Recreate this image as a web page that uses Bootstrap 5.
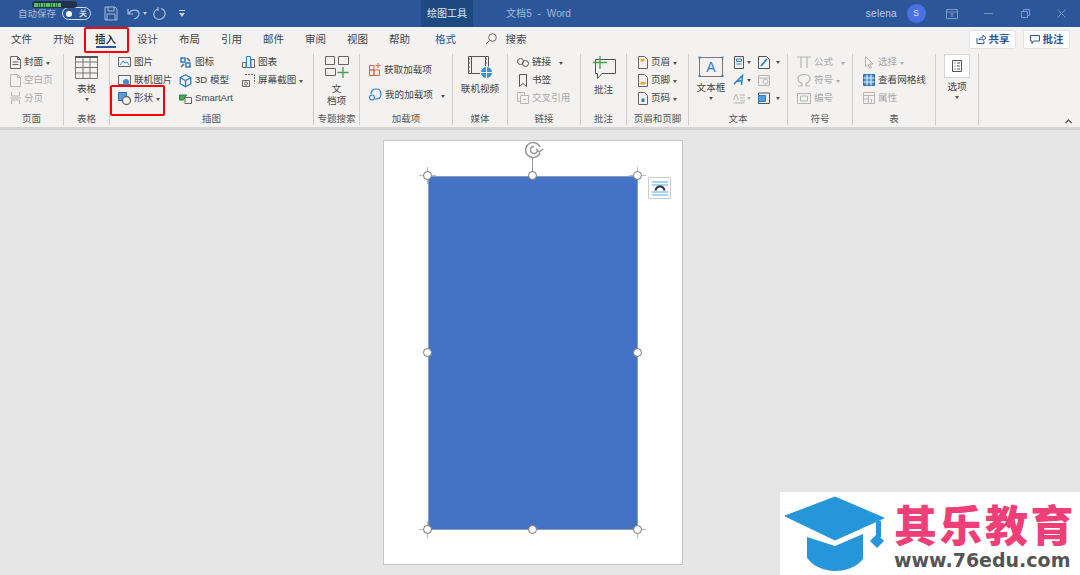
<!DOCTYPE html>
<html lang="zh-CN"><head><meta charset="utf-8"><title>文档5 - Word</title>
<link href="https://cdn.jsdelivr.net/npm/bootstrap@5.3.0/dist/css/bootstrap.min.css" rel="stylesheet">
<style>
html,body{width:1080px;height:575px;overflow:hidden;margin:0;background:#e6e6e6}
body{font-family:"Liberation Sans","Noto Sans CJK SC",sans-serif;font-size:10px;line-height:1;color:#444;position:relative}
svg{display:block;flex:none;overflow:visible}
.titlebar{height:27px;background:#2b579a;color:#a9bcd8;padding-left:18px;position:relative}
.tsave{margin-left:13px}.tundo{margin-left:9px}.tredo{margin-left:6px}.tqat{margin-left:13px}
.auto{font-size:9.5px;width:44px}
.toggle{width:29px;height:13px;border:1px solid #d5dfec;border-radius:7px;padding:0 3px;color:#fff;font-size:8px;justify-content:space-between}
.toggle i{width:6px;height:6px;border-radius:50%;background:#fff;display:block}
.batt{position:absolute;left:32px;top:1px;width:45px;height:7px;border-radius:4px;background:#23324a;padding:1.5px 2px}
.batt b{display:block;width:27px;height:4px;background:repeating-linear-gradient(90deg,#58c060 0 1.6px,#2c7a3a 1.6px 2.4px)}
.tool{margin-left:236px;width:52px;height:27px;background:#1d4a80;color:#dfe7f2;font-size:10px}
.doc{margin-left:33px;font-size:10px;color:#a5b9d6;letter-spacing:.1px}
.uname{margin-left:auto;font-size:10px;color:#c0cee2;letter-spacing:.3px}
.avatar{width:19px;height:19px;border-radius:50%;background:#4b70e2;color:#d9e2fb;font-size:8.5px;margin:0 8.5px 0 9.5px}
.wbtn{width:36.5px}
.tabs{height:24px;background:#f3f2f1;font-size:10.5px;color:#444;padding-left:.5px}
.tabx{width:42px;height:24px;position:relative}
.tabx.on{font-weight:500;color:#222}
.tabx.on::after{content:"";position:absolute;left:11px;right:11px;bottom:3px;height:2px;background:#2b579a}
.fmt{color:#2b579a;margin-left:4px;width:42px}
.srch{margin-left:18px}.srchtxt{margin-left:9px}
.sbtn{width:47px;height:19px;background:#fff;border:1px solid #e3e2e0;border-radius:2px;color:#2b579a;font-weight:700;font-size:10.5px;gap:3px}
.sright{margin-left:auto;margin-right:10px;gap:7px}
.ribbon{height:76px;background:#f3f2f1}
.grp{border-right:1px solid #cfcdcb;margin-top:3px;height:71px;position:relative}
.body{height:57px;margin-top:-1px}
.cap{height:15px;font-size:9.5px;color:#555;text-align:center;padding-top:4px;white-space:nowrap}
.g1{width:64px}.g2{width:46px}.g3{width:204px}.g4{width:46px}.g5{width:93px}
.g6{width:55px}.g7{width:73px}.g8{width:46px}.g9{width:62px}.g10{width:99px}.g11{width:65px}.g12{width:83px}.g13{width:43px}
.g1 .body{padding-left:10px}.g3 .body{padding-left:8px}.g5 .body{padding-left:9px;padding-top:4px}.g7 .body{padding-left:9px}
.g9 .body{padding-left:11px}.g11 .body{padding-left:9px}.g12 .body{padding-left:10px}
.itm{height:18px;gap:3px;white-space:nowrap;font-size:9.6px}
.off{color:#a8a8a8}
.tri{display:inline-block;width:0;height:0;border-left:2.5px solid transparent;border-right:2.5px solid transparent;border-top:3px solid #555;margin-left:3px}
.off .tri{border-top-color:#aaa}
.tri.lite{border-top-color:#c5d2e4}
.tri.near{margin-left:-1px}
.big{font-size:9.6px;line-height:12px;text-align:center;padding-top:3px}
.big .tri{margin:3px 0 0}
.c1{width:61px}.c2{width:63px}
.tall{height:25px}
.tbbig{width:44px}
.tcol{width:25px}
.optbox{width:26px;height:24px;background:#fff;border:1px solid #d8d6d4}
.opt.big{padding-top:1px}
.optlbl{margin-top:3px}
.collapse-end{flex:1;position:relative}
.chev{position:absolute;right:8px;bottom:3px}
.band{height:3px;background:#d4d4d4}
.canvas{height:448px;background:#e6e6e6;padding:10px 14px 0 0}
.sheet{width:300px;height:425px;background:#fff;border:1px solid #c6c6c6;position:relative}
.shp{position:absolute;left:44px;top:35px;width:210px;height:354px;background:#4472c4;border:1px solid #8d9cb8}
.hd{position:absolute;width:9px;height:9px;border-radius:50%;background:#fff;border:1.4px solid #777;margin:-5.5px 0 0 -5.5px}
.tickh{position:absolute;width:17px;height:1px;background:#bdbdbd;margin-left:-9px;margin-top:-1px}
.tickv{position:absolute;width:1px;height:17px;background:#bdbdbd;margin-top:-9px;margin-left:-1px}
.xl{left:44px}.xm{left:149px}.xr{left:254px}
.yt{top:35px}.ym{top:212px}.yb{top:389px}
.rotline{position:absolute;left:148px;top:16px;width:1px;height:19px;background:#9a9a9a}
.rot{position:absolute;left:141px;top:0}
.lay{position:absolute;left:264px;top:36px;width:23px;height:22px;background:#fff;border:1px solid #ccc;border-radius:1px}
.red{position:absolute;border:2px solid #f00;border-radius:2px}
.red1{left:84px;top:27px;width:45px;height:26px}
.red2{left:110px;top:85px;width:55px;height:31px}
.mark{position:absolute;left:780px;top:492px;width:300px;height:83px;background:#fff}
.mk1{position:absolute;left:114px;top:9px;font:900 43px/44px "Noto Sans CJK SC",sans-serif;color:#ee3f78;letter-spacing:2.5px;white-space:nowrap}
.mk2{position:absolute;left:114px;top:58px;font:700 19px/20px "DejaVu Sans",sans-serif;color:#555;white-space:nowrap}
.mkicon{position:absolute;left:4px;top:5px}
</style></head><body>

<div class="titlebar d-flex align-items-center">
  <div class="batt"><b></b></div>
  <span class="auto">自动保存</span>
  <div class="toggle d-flex align-items-center"><i></i><span>关</span></div>
  <svg class="tsave" width="14" height="15" viewBox="0 0 14 15" fill="none" stroke="#a9bcd8"><path d="M1 1h10l2 2v11H1zM4 1v4h6V1M3 14V8h8v6"/></svg>
  <svg class="tundo" width="13" height="13" viewBox="0 0 13 13" fill="none" stroke="#a9bcd8" stroke-width="1.2"><path d="M1 2v5h5M1.500 6.500C4 2.500 11 1.500 12 6c.4 3-2 5.500-5 6"/></svg>
  <span class="tri lite"></span>
  <svg class="tredo" width="13" height="13" viewBox="0 0 13 13" fill="none" stroke="#a9bcd8" stroke-width="1.2"><path d="M8 1.500C11 2.500 12.500 5 12 8c-1 3.500-5 5-8 4C1 11 0 7 1.500 4.500 3 2.500 4 2 5.500 2M5 0v4"/></svg>
  <svg class="tqat" width="6" height="7" viewBox="0 0 6 7" fill="#c5d2e4"><path d="M0 0h6v1H0zM0 3h6L3 7z"/></svg>
  <div class="tool d-flex align-items-center justify-content-center">绘图工具</div>
  <div class="doc">文档5&nbsp;&nbsp;-&nbsp;&nbsp;Word</div>
  <div class="uname">selena</div>
  <div class="avatar d-flex align-items-center justify-content-center">S</div>
  <div class="wbtn d-flex justify-content-center"><svg width="12" height="10" viewBox="0 0 12 10" fill="none" stroke="#7f98c0"><path d="M.5.500h11v9H.5zM.5 3h11M6 8V4.500M4.500 6 6 4.500 7.500 6"/></svg></div>
  <div class="wbtn d-flex justify-content-center"><svg width="9" height="1" viewBox="0 0 9 1" stroke="#7f98c0"><path d="M0 .5h9"/></svg></div>
  <div class="wbtn d-flex justify-content-center"><svg width="9" height="9" viewBox="0 0 9 9" fill="none" stroke="#7f98c0"><path d="M.5 2.500h6v6h-6zM2.500 2.500v-2h6v6h-2"/></svg></div>
  <div class="wbtn d-flex justify-content-center"><svg width="9" height="9" viewBox="0 0 9 9" fill="none" stroke="#7f98c0"><path d="M.5.500l8 8M8.500.500l-8 8"/></svg></div>
</div>

<div class="tabs d-flex align-items-center">
  <div class="tabx d-flex align-items-center justify-content-center">文件</div>
  <div class="tabx d-flex align-items-center justify-content-center">开始</div>
  <div class="tabx on d-flex align-items-center justify-content-center">插入</div>
  <div class="tabx d-flex align-items-center justify-content-center">设计</div>
  <div class="tabx d-flex align-items-center justify-content-center">布局</div>
  <div class="tabx d-flex align-items-center justify-content-center">引用</div>
  <div class="tabx d-flex align-items-center justify-content-center">邮件</div>
  <div class="tabx d-flex align-items-center justify-content-center">审阅</div>
  <div class="tabx d-flex align-items-center justify-content-center">视图</div>
  <div class="tabx d-flex align-items-center justify-content-center">帮助</div>
  <div class="fmt d-flex align-items-center justify-content-center">格式</div>
  <svg class="srch" width="12" height="12" viewBox="0 0 12 12" fill="none" stroke="#666"><circle cx="7.500" cy="4.500" r="3.800"/><path d="M4.800 7.200 1 11"/></svg>
  <span class="srchtxt">搜索</span>
  <div class="sright d-flex">
    <div class="sbtn d-flex align-items-center justify-content-center"><svg width="10" height="10" viewBox="0 0 10 10" fill="none" stroke="#2b579a"><path d="M1 4v5.500h7V7M3 6c.5-2 2-3 4-3V1l3 3-3 2.500V5C5.500 5 4 5.200 3 6z"/></svg>共享</div>
    <div class="sbtn d-flex align-items-center justify-content-center"><svg width="10" height="9" viewBox="0 0 10 9" fill="none" stroke="#2b579a"><path d="M.5.500h9v5.500H3.500L2 8.500V6H.5z"/></svg>批注</div>
  </div>
</div>

<div class="ribbon d-flex">
  <!-- 页面 -->
  <div class="grp g1">
    <div class="body">
      <div class="itm d-flex align-items-center"><svg width="11" height="13" viewBox="0 0 11 13" fill="none" stroke="#666"><path d="M.5.500h7l3 3v9H.500zM7.500.500v3h3M2.500 6h6M2.500 8.500h6"/></svg><span>封面<span class="tri"></span></span></div>
      <div class="itm off d-flex align-items-center"><svg width="11" height="13" viewBox="0 0 11 13" fill="none" stroke="#b5b5b5"><path d="M.5.500h7l3 3v9H.500zM7.500.500v3h3"/></svg><span>空白页</span></div>
      <div class="itm off d-flex align-items-center"><svg width="11" height="12" viewBox="0 0 11 12" fill="none" stroke="#b5b5b5"><path d="M1.500 0v4h8V0M0 6h11M1.500 12V8h8v4"/></svg><span>分页</span></div>
    </div>
    <div class="cap">页面</div>
  </div>
  <!-- 表格 -->
  <div class="grp g2">
    <div class="body big d-flex flex-column align-items-center">
      <svg width="23" height="23" viewBox="0 0 23 23" fill="none" stroke="#777"><path d="M.5.500h22v22H.5zM.5 6h22M.5 11.500h22M.5 17h22M8 .5v22M15 .5v22"/><path d="M0 1h23" stroke="#555" stroke-width="2"/></svg>
      <span class="mt-1">表格</span><span class="tri"></span>
    </div>
    <div class="cap">表格</div>
  </div>
  <!-- 插图 -->
  <div class="grp g3">
    <div class="body d-flex">
      <div class="c1">
        <div class="itm d-flex align-items-center"><svg width="13" height="12" viewBox="0 0 13 12" fill="none" stroke="#666"><path d="M.5 1.500h12v9H.5z"/><path d="M2 9l3-4 2 2 2-1 2 3" stroke="#3f8ed0"/></svg><span>图片</span></div>
        <div class="itm d-flex align-items-center"><svg width="13" height="12" viewBox="0 0 13 12" fill="none" stroke="#666"><path d="M.5 1.500h12v9H.5z"/><circle cx="8" cy="8" r="3" fill="#3f8ed0" stroke="none"/></svg><span>联机图片</span></div>
        <div class="itm d-flex align-items-center"><svg width="13" height="13" viewBox="0 0 13 13" fill="none"><path d="M.5.500h8v8h-8z" fill="#5b9bd5" stroke="#2f6fb0"/><circle cx="8.500" cy="8.500" r="4" fill="#f3f2f1" stroke="#666" stroke-width="1.300"/></svg><span>形状<span class="tri"></span></span></div>
      </div>
      <div class="c2">
        <div class="itm d-flex align-items-center"><svg width="13" height="13" viewBox="0 0 13 13" fill="none" stroke="#2f7fc4" stroke-width="1.500"><path d="M2 2h4v4H2zM7 7h4v4H7z"/><path d="M8 2l3 3M2 11l3-3" stroke="#666"/></svg><span>图标</span></div>
        <div class="itm d-flex align-items-center"><svg width="13" height="13" viewBox="0 0 13 13" fill="none" stroke="#2f7fc4" stroke-width="1.300"><path d="M6.500.700l5.300 3v6l-5.300 3-5.300-3v-6zM6.500 6.500v6M1.200 3.700l5.300 2.800 5.300-2.800"/></svg><span>3D 模型</span></div>
        <div class="itm d-flex align-items-center"><svg width="13" height="12" viewBox="0 0 13 12" fill="none" stroke="#666"><path d="M.5 3h7l-3 5h-4z" fill="#4ea85a" stroke="#2f7f3c"/><path d="M6 5.500h6.500v6H6z" fill="#f3f2f1"/></svg><span>SmartArt</span></div>
      </div>
      <div>
        <div class="itm d-flex align-items-center"><svg width="13" height="12" viewBox="0 0 13 12" fill="none" stroke="#666"><path d="M.5 6.500h3.500v5H.5zM9 3.500h3.500v8H9z"/><path d="M4.500.500h4v11h-4z" stroke="#2f7fc4"/></svg><span>图表</span></div>
        <div class="itm d-flex align-items-center"><svg width="13" height="13" viewBox="0 0 13 13" fill="none" stroke="#666"><path d="M3 .5h9.500v9" stroke-dasharray="2 1"/><path d="M.5 6.500h7v6h-7z"/><circle cx="4" cy="9.500" r="1.500"/></svg><span>屏幕截图<span class="tri"></span></span></div>
      </div>
    </div>
    <div class="cap">插图</div>
  </div>
  <!-- 专题搜索 -->
  <div class="grp g4">
    <div class="body big d-flex flex-column align-items-center">
      <svg width="24" height="23" viewBox="0 0 24 23" fill="none" stroke="#666"><path d="M.5.500h9v8h-9zM13.500.500h10v8h-10zM.5 12.500h10v7h-10z"/><path d="M18 11v11M12.500 16.500h11" stroke="#3fa34d" stroke-width="1.300"/></svg>
      <span class="mt-1">文<br>档项</span>
    </div>
    <div class="cap">专题搜索</div>
  </div>
  <!-- 加载项 -->
  <div class="grp g5">
    <div class="body">
      <div class="itm tall d-flex align-items-center"><svg width="12" height="13" viewBox="0 0 12 13" fill="none" stroke="#e2603a"><path d="M.5 2.500h4.500v4.500H.5zM.5 7h4.500v5.500H.5zM5 7h5.500v5.500H5zM9 0v5M6.500 2.500h5"/></svg><span>获取加载项</span></div>
      <div class="itm tall d-flex align-items-center"><svg width="13" height="13" viewBox="0 0 13 13" fill="none" stroke="#2f7fc4" stroke-width="1.200"><circle cx="3" cy="9.500" r="2.500"/><path d="M2 6c0-3 2-5 5-5 3 0 5 2 5 5s-2 5-5 5H6"/></svg><span>我的加载项<span class="tri ms-2"></span></span></div>
    </div>
    <div class="cap">加载项</div>
  </div>
  <!-- 媒体 -->
  <div class="grp g6">
    <div class="body big d-flex flex-column align-items-center">
      <svg width="25" height="23" viewBox="0 0 25 23" fill="none" stroke="#555"><path d="M.5.500h20v17H.5zM3.500.500v17M17.500.500v17" /><path d="M1 3h2M1 7h2M1 11h2M1 15h2M18 3h2M18 7h2" stroke-dasharray="1 1"/><circle cx="18.500" cy="16.500" r="6" fill="#3f8ed0" stroke="#f3f2f1"/><path d="M12.500 16.500h12M18.500 10.500v12" stroke="#f3f2f1"/></svg>
      <span class="mt-1">联机视频</span>
    </div>
    <div class="cap">媒体</div>
  </div>
  <!-- 链接 -->
  <div class="grp g7">
    <div class="body">
      <div class="itm d-flex align-items-center"><svg width="12" height="9" viewBox="0 0 12 9" fill="none" stroke="#555"><circle cx="3.500" cy="3.500" r="3"/><circle cx="8.500" cy="5.500" r="3"/></svg><span>链接<span class="tri ms-2"></span></span></div>
      <div class="itm d-flex align-items-center"><svg width="12" height="13" viewBox="0 0 12 13" fill="none" stroke="#555"><path d="M2.500.5h7v12L6 9.500l-3.500 3z"/></svg><span>书签</span></div>
      <div class="itm off d-flex align-items-center"><svg width="12" height="12" viewBox="0 0 12 12" fill="none" stroke="#b5b5b5"><path d="M.5.500h7v2M.5.500v9h2M3.500 3.500h8v8h-8zM6 7.500h3"/></svg><span>交叉引用</span></div>
    </div>
    <div class="cap">链接</div>
  </div>
  <!-- 批注 -->
  <div class="grp g8">
    <div class="body big d-flex flex-column align-items-center">
      <svg width="24" height="24" viewBox="0 0 24 24" fill="none" stroke="#555"><path d="M3.500 3.500h20v14H10l-4.500 5v-5h-2z"/><path d="M8 0v13M1 6.500h14" stroke="#3fa34d" stroke-width="1.300"/></svg>
      <span class="mt-1">批注</span>
    </div>
    <div class="cap">批注</div>
  </div>
  <!-- 页眉和页脚 -->
  <div class="grp g9">
    <div class="body">
      <div class="itm d-flex align-items-center"><svg width="10" height="13" viewBox="0 0 10 13" fill="none" stroke="#666"><path d="M.5.500h6l3 3v9H.5z"/><path d="M2.500 3h4v2.500h-4z" fill="#f0a030" stroke="none"/></svg><span>页眉<span class="tri"></span></span></div>
      <div class="itm d-flex align-items-center"><svg width="10" height="13" viewBox="0 0 10 13" fill="none" stroke="#666"><path d="M.5.500h6l3 3v9H.5z"/><path d="M2.500 8h5v2.500h-5z" fill="#f0a030" stroke="none"/></svg><span>页脚<span class="tri"></span></span></div>
      <div class="itm d-flex align-items-center"><svg width="10" height="13" viewBox="0 0 10 13" fill="none" stroke="#666"><path d="M.5.500h6l3 3v9H.5z"/><path d="M3.500 6.500h3v3.500h-3z" fill="#2f7fc4" stroke="none"/></svg><span>页码<span class="tri"></span></span></div>
    </div>
    <div class="cap">页眉和页脚</div>
  </div>
  <!-- 文本 -->
  <div class="grp g10">
    <div class="body d-flex">
      <div class="tbbig big d-flex flex-column align-items-center">
        <svg width="26" height="22" viewBox="0 0 26 22" fill="none"><path d="M1.500 1.500h23v19h-23z" stroke="#777"/><rect x=".5" y=".5" width="2" height="2" fill="#2f7fc4"/><rect x="23.500" y="19" width="2" height="2" fill="#2f7fc4"/><rect x="23.500" y=".5" width="2" height="2" fill="#2f7fc4"/><rect x=".5" y="19" width="2" height="2" fill="#2f7fc4"/><text x="13" y="16" text-anchor="middle" font-size="14" fill="#2f7fc4" font-family="Liberation Sans">A</text></svg>
        <span class="mt-1">文本框</span><span class="tri"></span>
      </div>
      <div class="tcol">
        <div class="itm d-flex align-items-center"><svg width="12" height="13" viewBox="0 0 12 13" fill="none" stroke="#555"><path d="M1.500.5h9v12h-9z"/><path d="M3.500 3h5v2.500h-5zM3.500 8h5" stroke="#2f7fc4"/></svg><span class="tri near"></span></div>
        <div class="itm d-flex align-items-center"><svg width="12" height="12" viewBox="0 0 12 12" fill="none" stroke="#2f7fc4" stroke-width="1.500"><path d="M1 10 9.500 1.500 8.500 11M3 7.500l6.500-1"/></svg><span class="tri near"></span></div>
        <div class="itm off d-flex align-items-center"><svg width="12" height="12" viewBox="0 0 12 12" fill="none" stroke="#b5b5b5"><path d="M.5 8 3 2l2.500 6M7 3h5M7 6h5M7 9h5M.5 11h11"/></svg><span class="tri near"></span></div>
      </div>
      <div class="tcol">
        <div class="itm d-flex align-items-center"><svg width="12" height="13" viewBox="0 0 12 13" fill="none" stroke="#555"><path d="M.5.500h8l3 3v9H.5z"/><path d="M3 10l6-7" stroke="#2f7fc4" stroke-width="1.800"/></svg><span class="tri"></span></div>
        <div class="itm off d-flex align-items-center"><svg width="12" height="12" viewBox="0 0 12 12" fill="none" stroke="#b5b5b5"><path d="M.5 1.500h11v10H.5zM.5 4h11"/><circle cx="7.500" cy="7.500" r="2.500"/></svg></div>
        <div class="itm d-flex align-items-center"><svg width="12" height="12" viewBox="0 0 12 12" fill="none" stroke="#555"><path d="M.5 1h11v10.500H.5z"/><path d="M.5 3.500h7v6h-7z" fill="#5b9bd5" stroke="#2f7fc4"/></svg><span class="tri"></span></div>
      </div>
    </div>
    <div class="cap">文本</div>
  </div>
  <!-- 符号 -->
  <div class="grp g11">
    <div class="body off">
      <div class="itm d-flex align-items-center"><svg width="14" height="12" viewBox="0 0 14 12" fill="none" stroke="#b5b5b5" stroke-width="1.200"><path d="M0 1h14M4 1v11M10 1v11"/></svg><span>公式<span class="tri ms-2"></span></span></div>
      <div class="itm d-flex align-items-center"><svg width="14" height="13" viewBox="0 0 14 13" fill="none" stroke="#b5b5b5" stroke-width="1.200"><path d="M1 12h4V9.500C2.500 8.500 1 6.500 1 4.500 1 2 3.500.5 7 .5s6 1.500 6 4c0 2-1.500 4-4 5V12h4"/></svg><span>符号<span class="tri"></span></span></div>
      <div class="itm d-flex align-items-center"><svg width="14" height="11" viewBox="0 0 14 11" fill="none" stroke="#b5b5b5"><path d="M.5.500h13v10H.5zM3.500 3h7v5h-7z"/></svg><span>编号</span></div>
    </div>
    <div class="cap">符号</div>
  </div>
  <!-- 表 -->
  <div class="grp g12">
    <div class="body">
      <div class="itm off d-flex align-items-center"><svg width="12" height="13" viewBox="0 0 12 13" fill="none" stroke="#b5b5b5"><path d="M2.500.5v10.500l2.500-2.500 2 4 1.500-.7-2-3.800h3.500z"/></svg><span>选择<span class="tri"></span></span></div>
      <div class="itm d-flex align-items-center"><svg width="12" height="12" viewBox="0 0 12 12" fill="#4a90d0" stroke="#2b6ca8"><path d="M.5.500h11v11H.5z"/><path d="M4 .5v11M8 .5v11M.5 4h11M.5 8h11" stroke="#f3f2f1"/></svg><span>查看网格线</span></div>
      <div class="itm off d-flex align-items-center"><svg width="12" height="12" viewBox="0 0 12 12" fill="none" stroke="#b5b5b5"><path d="M.5.500h11v11H.5zM.5 3.500h11M.5 7h5M5.500 3.500v8M8.500 7v4.500"/></svg><span>属性</span></div>
    </div>
    <div class="cap">表</div>
  </div>
  <!-- 选项 -->
  <div class="grp g13">
    <div class="body opt big d-flex flex-column align-items-center">
      <div class="optbox d-flex align-items-center justify-content-center"><svg width="10" height="12" viewBox="0 0 10 12" fill="none" stroke="#555"><path d="M.5.500h9v11h-9zM2.500 3h1M5 3h3M2.500 6h1M5 6h3M2.500 9h1M5 9h3"/></svg></div>
      <span class="optlbl">选项</span><span class="tri"></span>
    </div>
  </div>
  <div class="collapse-end"><svg class="chev" width="7" height="5" viewBox="0 0 7 5" fill="none" stroke="#555" stroke-width="1.300"><path d="M.5 4 3.500 1l3 3"/></svg></div>
</div>
<div class="band"></div>

<div class="canvas d-flex justify-content-center">
  <div class="sheet">
    <svg class="rot" width="18" height="18" viewBox="0 0 18 18" fill="none" stroke="#9a9a9a" stroke-width="1.500"><path d="M15 12a7.500 7.500 0 1 1 0-6M9 5.500a3.500 3.500 0 1 0 3.500 4"/><path d="M11 8l3.500 3L18 8" stroke-width="1.600"/></svg>
    <div class="rotline"></div>
    <div class="tickh xl yt"></div><div class="tickv xl yt"></div>
    <div class="tickh xr yt"></div><div class="tickv xr yt"></div>
    <div class="tickh xl yb"></div><div class="tickv xl yb"></div>
    <div class="tickh xr yb"></div><div class="tickv xr yb"></div>
    <div class="shp"></div>
    <div class="hd xl yt"></div><div class="hd xm yt"></div><div class="hd xr yt"></div>
    <div class="hd xl ym"></div><div class="hd xr ym"></div>
    <div class="hd xl yb"></div><div class="hd xm yb"></div><div class="hd xr yb"></div>
    <div class="lay d-flex align-items-center justify-content-center"><svg width="18" height="15" viewBox="0 0 18 15" fill="none"><path d="M1 1h16M1 4h16M1 11h16M1 14h16" stroke="#4aa8e8"/><path d="M4.500 9.500C5.500 4 12.500 4 13.500 9.500" stroke="#333" stroke-width="2"/></svg></div>
  </div>
</div>

<div class="red red1"></div>
<div class="red red2"></div>

<div class="mark">
  <svg class="mkicon" width="100" height="77" viewBox="0 0 100 77" fill="#2596d9"><path d="M1 19 51 0l49 21-49 22z" stroke="#2596d9" stroke-linejoin="round"/><path d="M23 40l28 9 28-12v25c-6 8-17 12-28 12s-22-5-28-13z"/><path d="M92 24h5v16h-5z"/><path d="M93 37l7 7-7 7-7-7z"/></svg>
  <div class="mk1">其乐教育</div>
  <div class="mk2">www.76edu.com</div>
</div>
<script src="https://cdn.jsdelivr.net/npm/bootstrap@5.3.0/dist/js/bootstrap.bundle.min.js"></script>
</body></html>
